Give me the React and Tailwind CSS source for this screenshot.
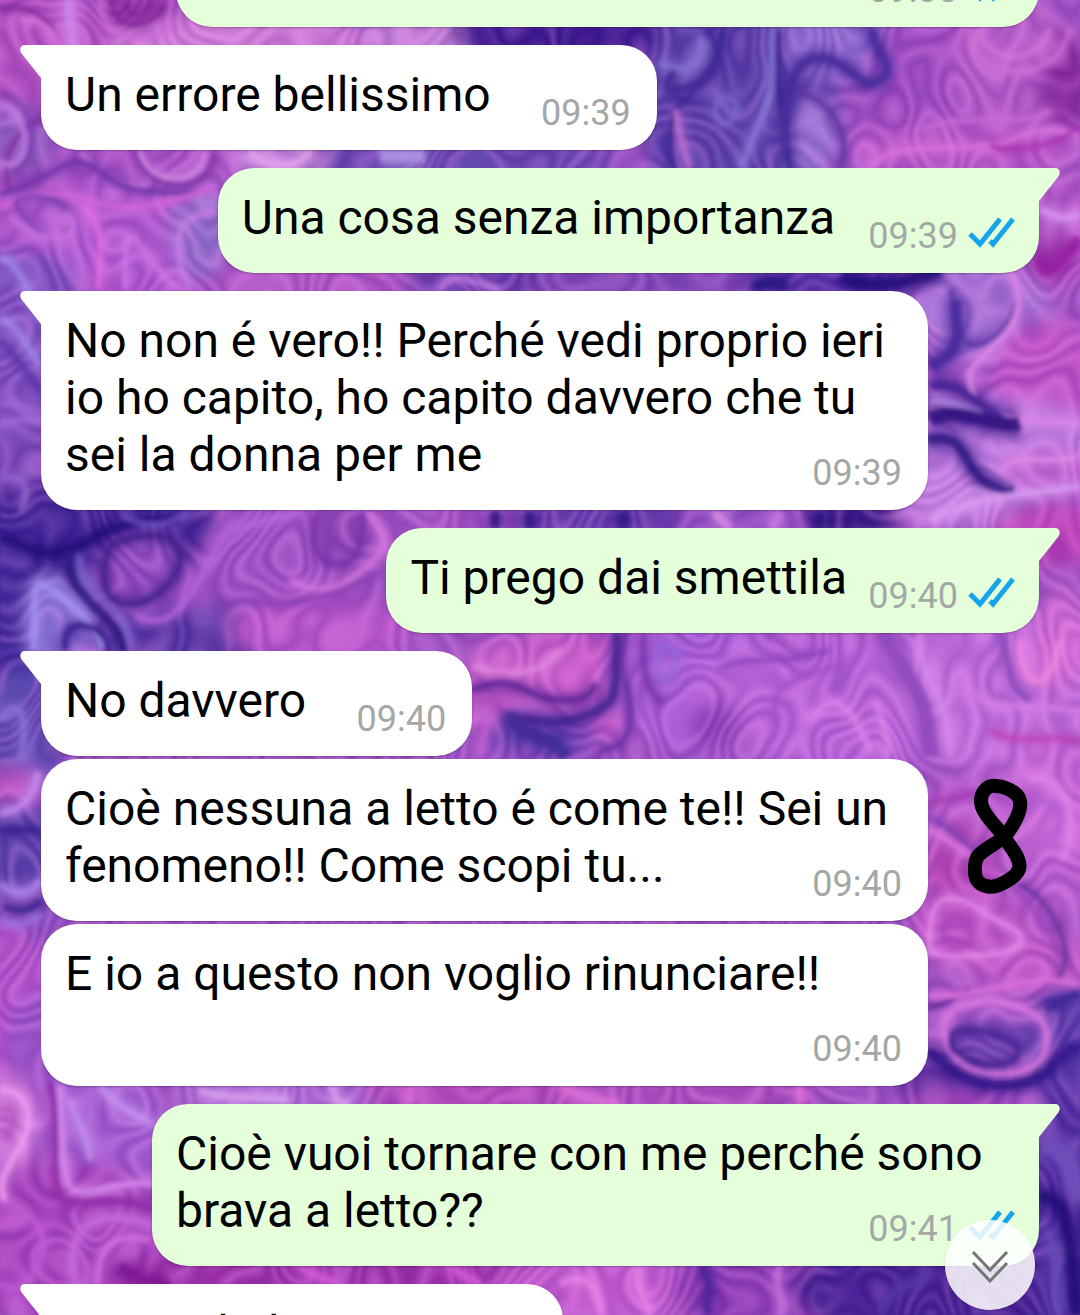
import React from 'react';
import { clsx } from 'clsx';

// --- MESSAGES ---
const MESSAGES = [
  { id: 1, mine: true, tail: false, text: '', time: '09:38', first: true },
  { id: 2, mine: false, tail: true, text: 'Un errore bellissimo', time: '09:39' },
  { id: 3, mine: true, tail: true, text: 'Una cosa senza importanza\u00a0', time: '09:39' },
  { id: 4, mine: false, tail: true, text: 'No non é vero!! Perché vedi proprio ieri io ho capito, ho capito davvero che tu sei la donna per me', time: '09:39' },
  { id: 5, mine: true, tail: true, text: 'Ti prego dai smettila', time: '09:40' },
  { id: 6, mine: false, tail: true, text: 'No davvero', time: '09:40' },
  { id: 7, mine: false, tail: false, text: 'Cioè nessuna a letto é come te!! Sei un fenomeno!! Come scopi tu...', time: '09:40', mark: true },
  { id: 8, mine: false, tail: false, text: 'E io a questo non voglio rinunciare!!', time: '09:40' },
  { id: 9, mine: true, tail: true, text: 'Cioè vuoi tornare con me perché sono brava a letto??', time: '09:41' },
  { id: 10, mine: false, tail: true, text: 'Non solo bene!!', time: '09:41' },
];

// --- WALLPAPER ---
// soft colour areas: [cx, cy, rx, ry, fill]
const AREAS = [
  [90, 120, 220, 220, '#ad54c8'],
  [20, 60, 90, 70, '#bd55c6'],
  [130, 10, 40, 30, '#a03ab0'],
  [20, 140, 34, 36, '#9566c8'],
  [240, 40, 130, 24, '#dc85dc'],
  [420, 36, 60, 22, '#cf8ade'],
  [560, 34, 110, 30, '#35148a'],
  [430, 160, 190, 26, '#6547b0'],
  [280, 160, 50, 16, '#c88ae0'],
  [740, 110, 100, 130, '#5540a8'],
  [835, 45, 60, 34, '#8f6fd2'],
  [815, 135, 26, 40, '#9a78d6'],
  [930, 100, 70, 90, '#a450c4'],
  [1010, 60, 60, 70, '#bb5fcc'],
  [1065, 80, 26, 50, '#8a2a9e'],
  [960, 150, 120, 24, '#c25ccc'],
  [1060, 230, 34, 60, '#c05fd0'],
  [1050, 260, 28, 20, '#a22ca8'],
  [120, 235, 110, 50, '#b45bd4'],
  [20, 290, 60, 40, '#7750bc'],
  [20, 370, 50, 100, '#7b50be'],
  [200, 230, 30, 50, '#9070cc'],
  [320, 282, 110, 16, '#b658c6'],
  [500, 282, 100, 16, '#5a35a5'],
  [640, 282, 110, 16, '#7c47b5'],
  [820, 282, 90, 16, '#4a2ca0'],
  [980, 310, 70, 50, '#ad78da'],
  [1050, 370, 60, 50, '#c654ca'],
  [1000, 450, 110, 50, '#c483e6'],
  [1060, 470, 60, 20, '#ce70dc'],
  [960, 500, 60, 30, '#d08bea'],
  [1060, 535, 70, 30, '#c443bb'],
  [10, 470, 60, 40, '#7a4ab9'],
  [90, 530, 130, 50, '#3b2293'],
  [20, 600, 60, 80, '#3b2898'],
  [60, 620, 36, 46, '#8775d6'],
  [140, 570, 42, 36, '#8f4cbe'],
  [200, 640, 100, 34, '#4d309f'],
  [290, 560, 90, 50, '#a253c6'],
  [320, 630, 90, 34, '#c25cd0'],
  [345, 535, 30, 30, '#9247b8'],
  [470, 519, 50, 16, '#a955c6'],
  [600, 519, 100, 16, '#5a37a8'],
  [740, 519, 60, 16, '#8a4cc0'],
  [850, 519, 50, 16, '#241078'],
  [560, 690, 110, 60, '#cf60cc'],
  [700, 680, 90, 70, '#ac60da'],
  [850, 700, 160, 70, '#bd68dc'],
  [715, 725, 26, 24, '#8e3fb8'],
  [1000, 690, 100, 80, '#c773e0'],
  [1060, 640, 30, 50, '#da70d8'],
  [540, 735, 60, 24, '#7044b8'],
  [20, 740, 44, 70, '#5c48b0'],
  [8, 790, 34, 20, '#c558c8'],
  [15, 850, 50, 50, '#5340a8'],
  [20, 920, 40, 34, '#8148b8'],
  [10, 1010, 40, 90, '#b853cc'],
  [34, 1060, 30, 70, '#9e55cc'],
  [1000, 850, 110, 80, '#c062d2'],
  [960, 870, 36, 50, '#b845b4'],
  [1060, 800, 50, 60, '#d06cdc'],
  [970, 930, 60, 40, '#c053c4'],
  [1030, 960, 70, 30, '#c95ccb'],
  [1065, 1040, 40, 60, '#553aa8'],
  [985, 1045, 44, 24, '#7549b8'],
  [940, 1080, 50, 24, '#6430a2'],
  [10, 1130, 30, 60, '#cf74da'],
  [100, 1130, 60, 70, '#a660d4'],
  [60, 1240, 130, 80, '#aa42bd'],
  [220, 1275, 110, 20, '#a12da8'],
  [430, 1275, 130, 20, '#a22ea8'],
  [600, 1290, 110, 30, '#ce60d4'],
  [760, 1290, 90, 40, '#8d3bb4'],
  [280, 1095, 110, 16, '#b070d8'],
  [480, 1095, 120, 16, '#bb48bb'],
  [700, 1095, 120, 16, '#b04dbe'],
  [960, 1110, 60, 20, '#a546bc'],
  [960, 1290, 170, 50, '#3a1a8c'],
  [1065, 1200, 40, 120, '#4a2c9e'],
];

// flowing veins: [path, stroke, width]
const VEINS = [
  ['M0 10C40 0 62 30 60 60S70 110 40 120S0 170 10 190', '#7d2a9c', 4],
  ['M20 20C60 20 62 50 58 70', '#d875dc', 4],
  ['M70 0C66 20 80 50 70 90', '#cf86ea', 10],
  ['M112 0C110 30 150 34 164 4M124 0C128 20 146 20 150 0', '#7c2398', 4],
  ['M100 0C100 50 160 44 174 20', '#cb6cd8', 4],
  ['M0 104C22 108 36 150 14 164H0', '#c580e6', 4],
  ['M0 94C34 96 46 160 10 174', '#7a38ac', 3],
  ['M140 150C146 186 200 188 206 152', '#d587e4', 5],
  ['M134 150C150 200 214 194 214 152', '#7e32a4', 4],
  ['M80 152C100 172 118 190 150 184', '#c775de', 4],
  ['M0 194C40 186 70 152 90 164S120 200 210 190', '#6e34a8', 5],
  ['M0 208C50 180 80 200 110 206S180 200 216 186', '#d065d8', 5],
  ['M14 202C50 184 84 214 66 232S30 224 14 202', '#7c3fb0', 4],
  ['M10 216C40 250 90 240 66 212', '#c672de', 5],
  ['M84 206C108 230 100 260 98 290', '#e370e2', 4],
  ['M126 290C124 260 126 226 136 240S160 274 178 290', '#d177e6', 4],
  ['M216 212C170 214 172 250 190 290', '#c87fe4', 4],
  ['M0 256C20 264 28 290 40 320M0 318C16 324 30 350 40 366', '#a184e4', 6],
  ['M0 340C20 360 30 376 40 390', '#5c36a8', 5],
  ['M0 405C16 400 30 408 41 414M0 424C16 420 30 418 41 422', '#a468d6', 4],
  ['M4 480C20 470 34 490 20 510', '#9a6ad0', 4],
  ['M250 150C260 168 300 172 310 150', '#e3a5ea', 5],
  ['M380 156H425', '#b295e4', 12],
  ['M660 62C690 80 706 60 700 36', '#8370cf', 8],
  ['M675 70C650 100 690 90 700 80S730 40 720 28', '#3a2590', 5],
  ['M672 168C666 130 668 110 700 86S714 40 706 28', '#3c2794', 5],
  ['M676 110C680 140 684 150 690 168', '#c070d8', 5],
  ['M775 28C770 60 776 90 762 118S750 150 740 168', '#8876d4', 6],
  ['M778 30C776 70 780 110 790 168', '#38228f', 5],
  ['M715 110C718 90 740 96 736 112S718 130 715 110', '#7b67cc', 4],
  ['M786 150C780 80 800 50 830 60S860 92 880 80S870 48 872 28', '#45299a', 9],
  ['M798 92C824 96 854 130 840 168', '#5b309f', 4],
  ['M980 28C984 64 1040 68 1050 28', '#d278d8', 4],
  ['M970 28C970 84 1060 88 1070 28', '#cf6ed6', 4],
  ['M870 168C890 140 960 150 990 146S1030 120 1080 136', '#d872da', 5],
  ['M920 130C970 110 1020 130 1050 110', '#c76ad6', 4],
  ['M990 145C1020 154 1060 144 1080 126', '#ab35b4', 4],
  ['M1040 210C1054 214 1060 222 1080 214', '#d692ee', 7],
  ['M1040 262C1046 278 1060 270 1078 238', '#951fa0', 7],
  ['M842 276C860 290 900 286 940 270', '#24107a', 12],
  ['M440 290C450 274 460 276 500 290', '#c07ae0', 4],
  ['M756 290C760 280 780 280 786 290', '#281580', 10],
  ['M950 290C960 310 956 340 970 344S1010 330 1018 300', '#5b38a8', 6],
  ['M955 300C958 340 962 352 930 366', '#3f2798', 11],
  ['M1010 270C1030 310 1010 330 990 350S966 370 972 390S1000 424 1080 422', '#dc87e8', 5],
  ['M930 386C960 380 970 400 1010 424', '#422494', 9],
  ['M930 402C950 400 960 406 980 414', '#ad82e2', 7],
  ['M930 420C960 404 980 426 1020 424', '#29107c', 14],
  ['M928 440C970 430 960 470 990 484S1006 490 1014 490', '#2c1480', 9],
  ['M1000 470C1020 450 1050 466 1080 456', '#e08ae8', 4],
  ['M930 520C990 490 1030 496 1080 486', '#d89af0', 5],
  ['M0 538C20 540 30 556 60 552S110 514 180 520', '#23107a', 9],
  ['M70 550C60 600 120 610 124 652', '#2b157f', 8],
  ['M80 556C76 596 130 600 130 650', '#7a62cc', 4],
  ['M110 546C140 530 176 532 180 552S160 602 130 604S100 570 110 546', '#45238f', 6],
  ['M34 650C34 600 34 580 42 584S90 610 104 650', '#a391ee', 6],
  ['M66 650C60 624 84 620 96 630S108 646 106 652', '#351f8e', 6],
  ['M136 616C170 634 190 600 210 560S240 530 300 512', '#b565da', 5],
  ['M122 516C150 530 170 524 190 512', '#6c4ebd', 4],
  ['M318 512C310 550 320 566 340 564S364 540 362 512', '#7632a6', 5],
  ['M290 580C320 596 340 590 370 564S374 530 370 512', '#d276de', 5],
  ['M250 600C300 610 350 590 384 570', '#8d42b6', 5],
  ['M495 512V528M530 512V528M624 512V528M820 512V528', '#2a1580', 8],
  ['M715 512C720 520 728 526 730 528', '#d88ae4', 8],
  ['M780 512C776 520 776 524 770 528', '#c878e2', 8],
  ['M472 666C500 674 540 680 560 650', '#e084dc', 5],
  ['M472 690C520 670 524 700 560 700S590 690 596 684', '#5c2696', 6],
  ['M618 633C612 680 626 700 590 714S540 720 514 718', '#3f2090', 8],
  ['M626 633C614 690 634 680 630 720S600 740 600 756', '#6730a4', 5],
  ['M472 706C500 710 480 740 480 756', '#c05fd0', 5],
  ['M512 712C510 740 550 730 566 756', '#3c2a94', 12],
  ['M644 633C640 680 650 690 662 704', '#7634ac', 5],
  ['M656 650C670 640 684 650 674 670S656 680 656 650', '#9a68da', 4],
  ['M720 668C750 654 770 668 830 650', '#8e45bc', 4],
  ['M776 720C766 680 800 680 840 664', '#a350c8', 4],
  ['M810 720C830 690 850 700 870 750M876 700C884 730 890 740 888 756', '#dd84ea', 4],
  ['M882 633C910 680 930 700 930 756', '#8f48bc', 14],
  ['M920 633C916 680 950 690 950 756', '#d486ea', 7],
  ['M1000 633C1010 660 1006 690 1030 700', '#8a4abc', 6],
  ['M1020 640C1020 690 1050 700 1060 640', '#ee86e0', 5],
  ['M966 680C980 720 1030 700 1080 712', '#d47ee6', 4],
  ['M990 730C1020 750 1050 730 1080 742', '#bd42b8', 4],
  ['M0 720C20 690 30 720 20 760', '#8c72d4', 5],
  ['M0 814C20 810 34 800 38 772', '#c58aee', 6],
  ['M0 884C16 900 34 890 40 880', '#a783e6', 6],
  ['M0 830H40M4 906C20 916 34 910 40 900', '#39218e', 5],
  ['M0 918C20 930 36 920 42 914', '#9b6edc', 5],
  ['M928 804C950 796 960 800 976 790', '#a43cb4', 4],
  ['M930 818C950 826 960 840 976 850', '#7e3cb0', 5],
  ['M930 830C950 840 960 850 970 856', '#d978e0', 5],
  ['M1036 800C1060 800 1068 820 1050 840', '#b460d2', 5],
  ['M1030 780C1070 770 1080 830 1062 860', '#e084e8', 4],
  ['M930 950C926 890 950 890 980 910S1026 930 1020 944S930 960 930 950', '#e68aea', 4],
  ['M944 940C940 906 960 910 970 930S950 950 944 940', '#ad45bc', 4],
  ['M1004 880C1030 900 1050 930 1060 956', '#9d45bc', 4],
  ['M1020 884C1050 900 1070 940 1064 966S1040 978 1026 980', '#69329f', 4],
  ['M928 1008C950 1004 960 994 970 990', '#5c2698', 5],
  ['M930 996C980 1000 1020 970 1080 984', '#dc70dc', 5],
  ['M944 1020C960 990 1040 1000 1046 1030S1030 1074 1000 1074S940 1060 944 1020', '#d877e0', 6],
  ['M952 1036C960 1022 1016 1036 1018 1050S990 1070 970 1060S950 1050 952 1036', '#462694', 6],
  ['M928 1050C960 1080 980 1090 1020 1084S1060 1040 1080 1050', '#33188a', 9],
  ['M1046 1010C1060 1000 1070 996 1080 994', '#3c2594', 7],
  ['M0 1090C30 1090 36 1120 18 1150S0 1180 4 1200', '#eb9cf0', 6],
  ['M0 1110C16 1106 20 1120 4 1140', '#b955bd', 4],
  ['M50 1084C60 1120 50 1180 60 1196S110 1190 152 1210', '#8f2ca6', 6],
  ['M60 1086C64 1140 60 1184 74 1190S120 1180 152 1184', '#d68bee', 5],
  ['M70 1100C80 1130 90 1140 90 1160', '#c28cec', 6],
  ['M100 1086C120 1110 140 1116 152 1124', '#c490ee', 7],
  ['M80 1300C60 1240 80 1200 152 1226', '#c467dc', 8],
  ['M100 1310C90 1250 110 1230 150 1240', '#d470df', 5],
  ['M0 1226C30 1200 50 1230 40 1260S10 1290 0 1284', '#c05ad4', 6],
  ['M120 1266C130 1276 140 1280 170 1284', '#7d1592', 8],
  ['M300 1266C310 1276 330 1280 340 1284M450 1266C460 1274 470 1280 480 1284', '#d15cd6', 6],
  ['M560 1284C590 1270 600 1290 600 1315M640 1266C630 1290 650 1300 650 1315', '#e482e4', 6],
  ['M700 1266C720 1290 700 1300 710 1315M840 1266C860 1290 850 1300 870 1315', '#4c2098', 8],
  ['M780 1266C770 1290 790 1300 780 1315', '#c36fdc', 6],
  ['M880 1315C890 1280 920 1290 930 1268', '#5436a4', 7],
  ['M1040 1150C1070 1140 1076 1180 1080 1200', '#6d4fba', 12],
  ['M1040 1196C1070 1200 1070 1230 1076 1315', '#220d76', 11],
  ['M1046 1230C1060 1250 1052 1290 1060 1315', '#6549b6', 7],
  ['M200 1090C220 1100 260 1096 290 1100M330 1086C340 1096 330 1104 350 1104', '#d7a0ee', 6],
  ['M410 1086V1104M560 1086C580 1096 590 1100 620 1104M800 1086V1104', '#da6ed6', 8],
];

const Wallpaper = () => (
  <svg
    className="absolute inset-0 h-full w-full"
    viewBox="0 0 1080 1315"
    preserveAspectRatio="xMidYMid slice"
    aria-hidden="true"
  >
    <defs>
      <filter id="areas" x="-10%" y="-10%" width="120%" height="120%">
        <feGaussianBlur stdDeviation="9" />
      </filter>
      <filter id="glow" x="0" y="0" width="100%" height="100%">
        <feGaussianBlur stdDeviation="5" />
      </filter>
      <filter id="marble" x="0" y="0" width="100%" height="100%">
        <feGaussianBlur stdDeviation="2" />
      </filter>
      {/* thin contour lines taken from smooth noise */}
      <filter id="lightLines" x="0" y="0" width="100%" height="100%" colorInterpolationFilters="sRGB">
        <feTurbulence type="fractalNoise" baseFrequency="0.011 0.008" numOctaves="2" seed="8" />
        <feColorMatrix values="0 0 0 0 0.9  0 0 0 0 0.58  0 0 0 0 0.96  1 0 0 0 0" />
        <feComponentTransfer>
          <feFuncA type="table" tableValues="0 0 0 0 0 0 0.7 0 0.4 0 0.8 0 0.5 0 0.7 0 0.5 0 0.7 0 0 0 0 0 0" />
        </feComponentTransfer>
        <feGaussianBlur stdDeviation="1" />
      </filter>
      <filter id="darkLines" x="0" y="0" width="100%" height="100%" colorInterpolationFilters="sRGB">
        <feTurbulence type="fractalNoise" baseFrequency="0.011 0.008" numOctaves="2" seed="8" />
        <feColorMatrix values="0 0 0 0 0.3  0 0 0 0 0.08  0 0 0 0 0.55  1 0 0 0 0" />
        <feComponentTransfer>
          <feFuncA type="table" tableValues="0 0 0 0 0 0 0 0.7 0 0.4 0 0.6 0 0.7 0 0.4 0 0.7 0 0 0 0 0 0 0" />
        </feComponentTransfer>
        <feGaussianBlur stdDeviation="1" />
      </filter>
    </defs>
    <rect width="1080" height="1315" fill="#a455c6" />
    <g filter="url(#areas)">
      {AREAS.map(([cx, cy, rx, ry, fill], i) => (
        <ellipse key={i} cx={cx} cy={cy} rx={rx} ry={ry} fill={fill} />
      ))}
    </g>
    <rect width="1080" height="1315" filter="url(#lightLines)" opacity="0.4" />
    <rect width="1080" height="1315" filter="url(#darkLines)" opacity="0.35" />
    <g filter="url(#glow)" fill="none" opacity="0.5">
      {VEINS.map(([d, stroke, width], i) => (
        <path key={i} d={d} stroke={stroke} strokeWidth={width * 2 + 4} />
      ))}
    </g>
    <g filter="url(#marble)" fill="none" opacity="0.8">
      {VEINS.map(([d, stroke, width], i) => (
        <path key={i} d={d} stroke={stroke} strokeWidth={width} />
      ))}
    </g>
  </svg>
);

// --- BUBBLES ---
const Tail = ({ mine }) => (
  <svg
    className={clsx(
      'absolute top-0 h-[34px] w-[22px]',
      mine ? 'left-full -ml-px -scale-x-100 fill-[#e5ffdb]' : 'right-full -mr-px fill-white'
    )}
    viewBox="0 0 22 34"
    aria-hidden="true"
  >
    <path d="M22 0H5C0 0-1 5 2 9L21 33H22Z" />
  </svg>
);

const Ticks = () => (
  <svg className="h-10 w-12" viewBox="0 0 48 40" fill="none" stroke="#12a5ee" strokeWidth="5" role="img" aria-label="Letto">
    <path d="M2 18L12 28L32 3M22 25L25 28L45 3" />
  </svg>
);

// hand-drawn number next to a message
const Eight = () => (
  <svg className="mt-[19px] ml-[38px] h-[116px] w-16 shrink-0" viewBox="0 0 64 116" fill="none" role="img" aria-label="8">
    <path
      d="M38 59C31 48 15 36 15 23C15 12 23 7 30 8C37 8 46 12 51 17C57 24 54 33 50 41C46 49 42 55 38 59C31 65 18 71 12 78C8 84 8 97 11 102C15 109 26 110 33 107C40 104 50 99 53 91C56 81 45 70 38 59Z"
      stroke="#000"
      strokeWidth="14"
      strokeLinejoin="round"
    />
  </svg>
);

const Bubble = ({ message }) => {
  const { mine, tail, text, time, first } = message;
  return (
    <div
      className={clsx(
        'relative grid max-w-[887px] rounded-[36px] shadow-[0_1px_2px_rgba(0,0,0,0.25)]',
        mine ? 'bg-[#e5ffdb]' : 'bg-white',
        tail && (mine ? 'rounded-tr-none' : 'rounded-tl-none'),
        first && 'min-w-[863px]'
      )}
    >
      {tail && <Tail mine={mine} />}
      <p className="col-start-1 row-start-1 px-6 pt-[21px] pb-[27px] text-[48px] leading-[57px] text-black">
        {text}
        {/* keeps the end of the last line free for the time */}
        <span className={clsx('inline-block h-px', mine ? 'w-[168px]' : 'w-[142px]')} />
      </p>
      <div
        className={clsx(
          'col-start-1 row-start-1 flex items-center gap-[10px] self-end justify-self-end pb-4 text-[36px] leading-[42px] text-[#a3a8a6]',
          mine ? 'pr-[23px]' : 'pr-[26px]'
        )}
      >
        <time>{time}</time>
        {mine && <Ticks />}
      </div>
    </div>
  );
};

const App = () => {
  return (
    <div className="relative h-screen overflow-hidden bg-[#a455c6] font-['Roboto',sans-serif]">
      <Wallpaper />

      <main className="relative -mt-[78px] flex flex-col px-[41px]">
        {MESSAGES.map((message) => (
          <div
            key={message.id}
            className={clsx(
              'flex items-start',
              message.mine && 'justify-end',
              !message.first && (message.tail ? 'mt-[18px]' : 'mt-[3px]')
            )}
          >
            <Bubble message={message} />
            {message.mark && <Eight />}
          </div>
        ))}
      </main>

      <button
        type="button"
        aria-label="Vai in fondo"
        className="absolute right-[45px] bottom-[5px] flex size-[90px] items-center justify-center rounded-full bg-white/85 shadow-sm"
      >
        <svg className="h-9 w-10" viewBox="0 0 40 36" fill="none" stroke="#757575" strokeWidth="3" aria-hidden="true">
          <path d="M3 5L20 23L37 5M3 16L20 34L37 16" />
        </svg>
      </button>
    </div>
  );
};

export default App;
